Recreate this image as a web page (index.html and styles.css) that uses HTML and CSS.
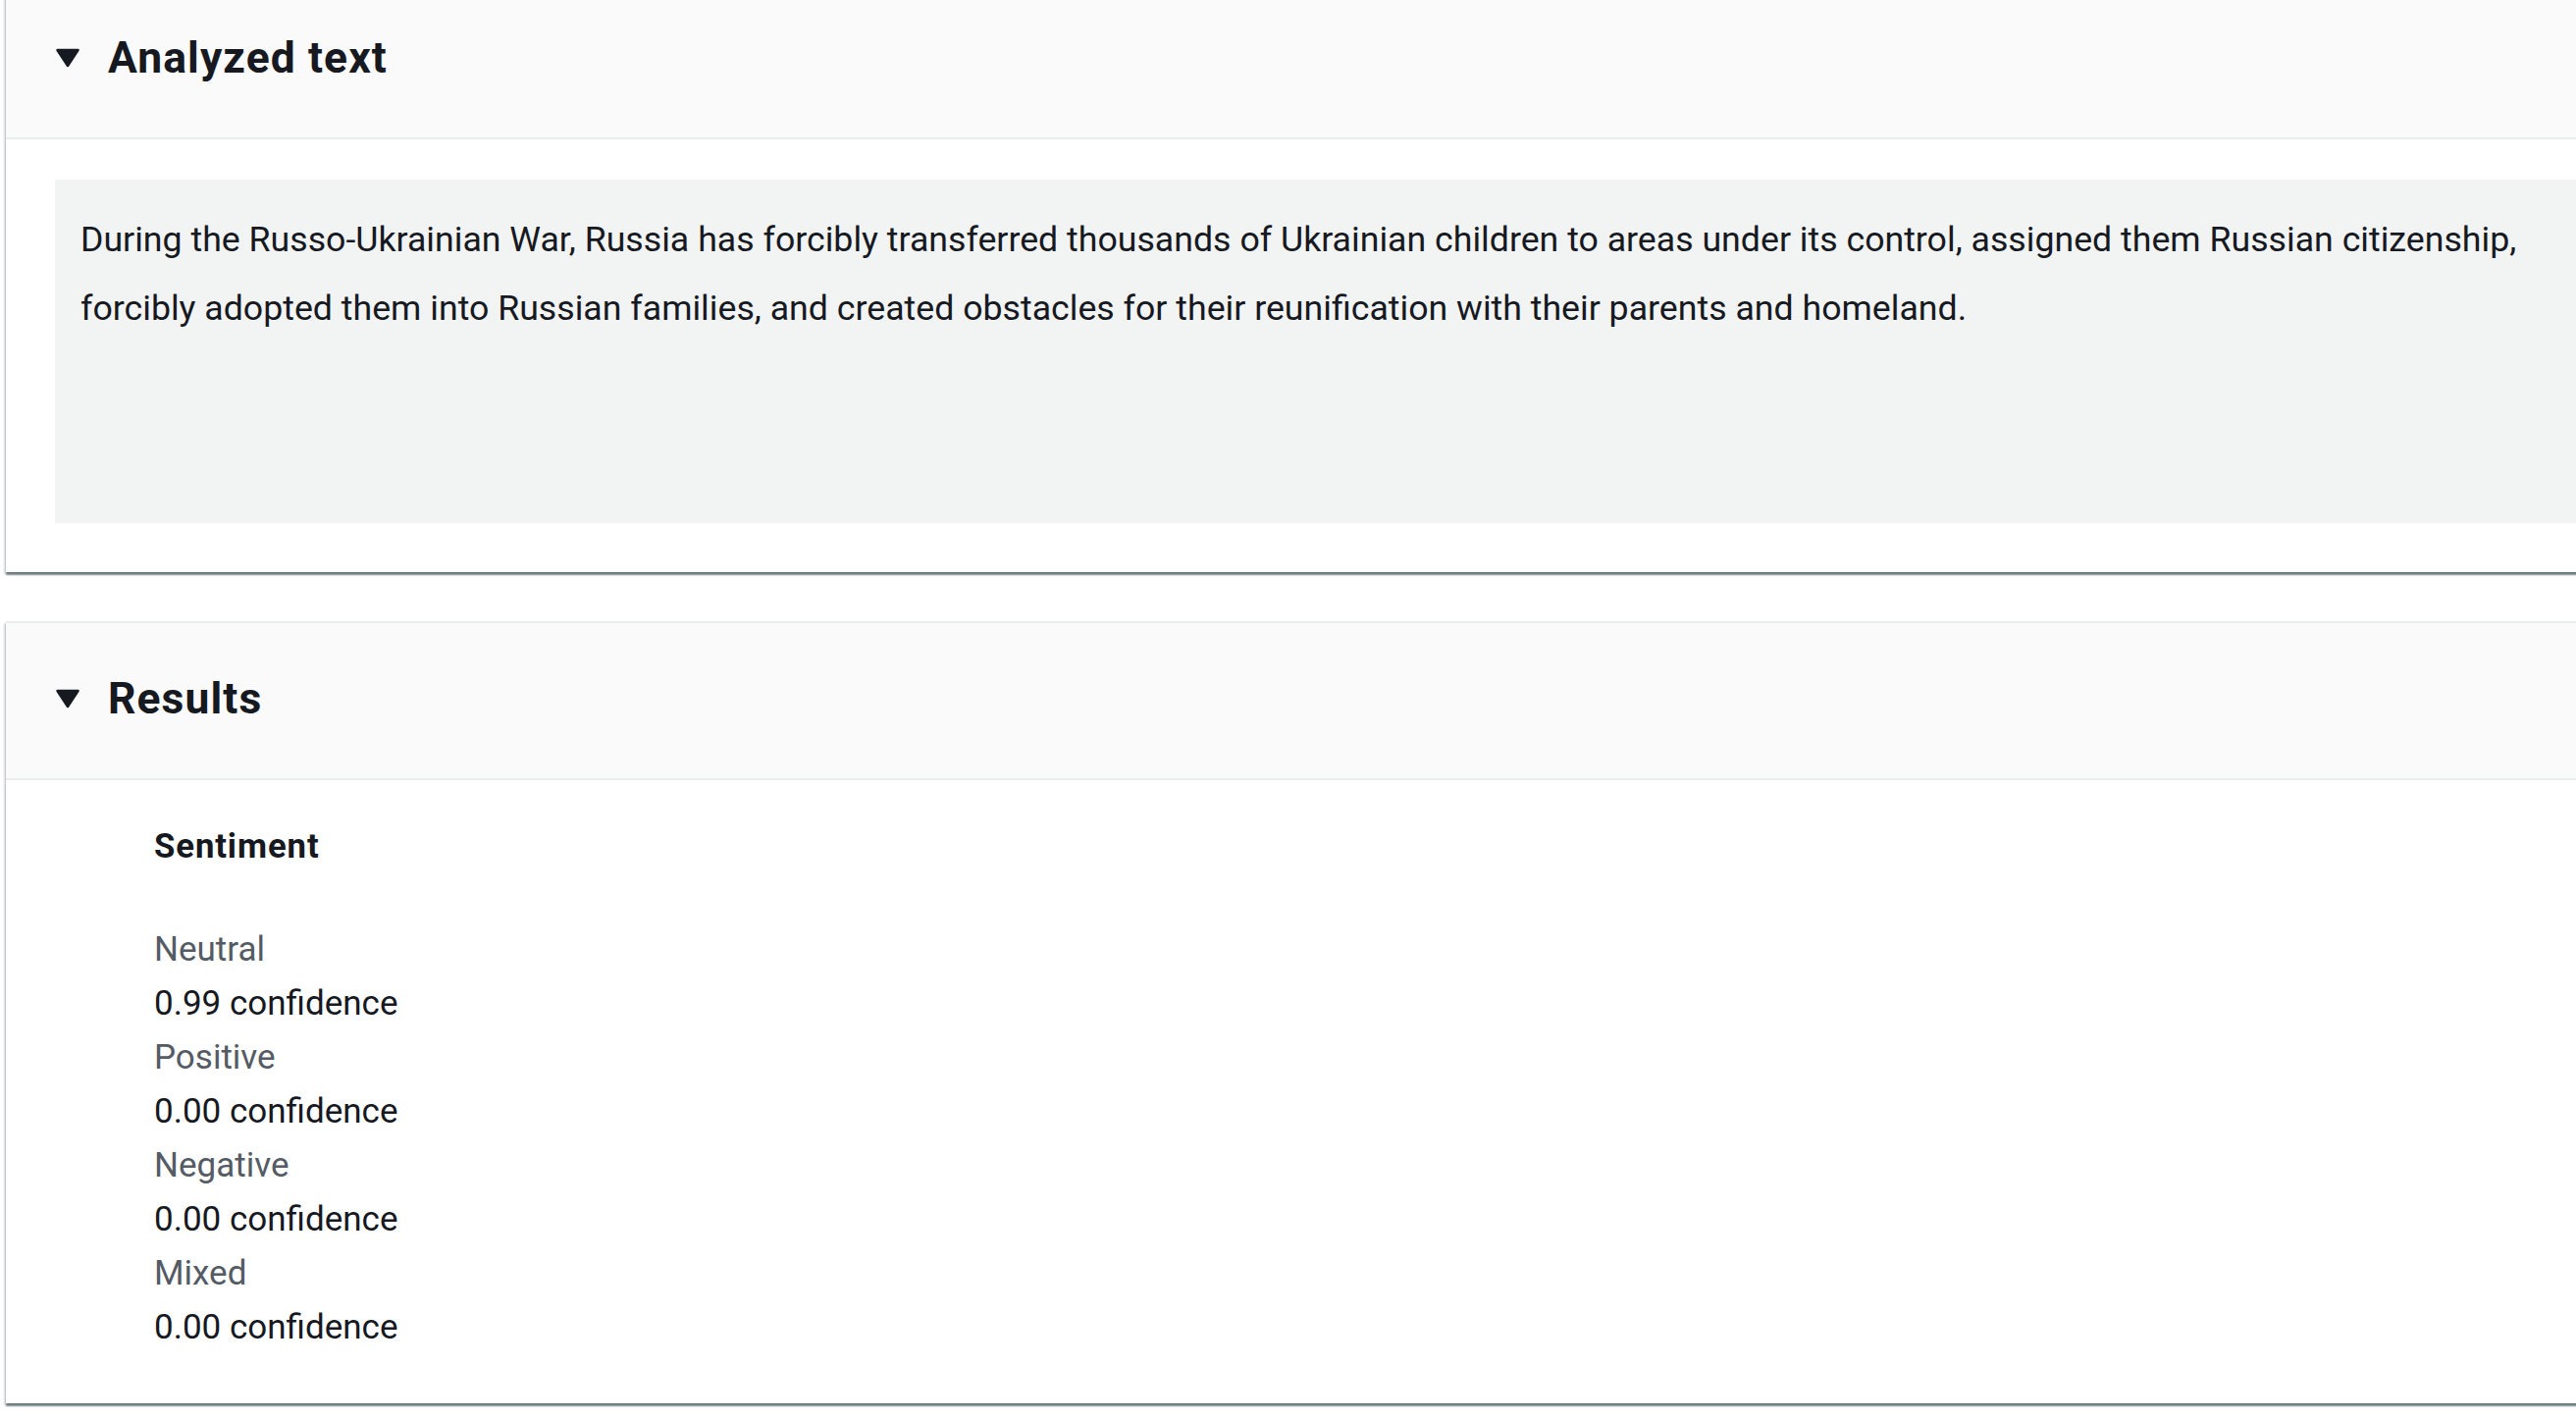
FILE: index.html
```html
<!DOCTYPE html>
<html lang="en">
<head>
<meta charset="utf-8">
<title>Analyzed text</title>
<link rel="stylesheet" href="styles.css">
</head>
<body>
<main class="page">
  <section class="card">
    <header class="card-header">
      <svg class="caret" viewBox="0 0 26 20" width="26" height="20" aria-hidden="true"><path d="M2.5 2 H23.5 L13 18 Z"/></svg>
      <h2 class="card-title">Analyzed text</h2>
    </header>
    <div class="card-body">
      <div class="text-box">During the Russo-Ukrainian War, Russia has forcibly transferred thousands of Ukrainian children to areas under its control, assigned them Russian citizenship, forcibly adopted them into Russian families, and created obstacles for their reunification with their parents and homeland.</div>
    </div>
  </section>

  <section class="card">
    <header class="card-header">
      <svg class="caret" viewBox="0 0 26 20" width="26" height="20" aria-hidden="true"><path d="M2.5 2 H23.5 L13 18 Z"/></svg>
      <h2 class="card-title">Results</h2>
    </header>
    <div class="card-body">
      <div class="sentiment">
        <h3 class="sentiment-title">Sentiment</h3>
        <dl class="scores">
          <dt class="score-label">Neutral</dt>
          <dd class="score-value">0.99 confidence</dd>
          <dt class="score-label">Positive</dt>
          <dd class="score-value">0.00 confidence</dd>
          <dt class="score-label">Negative</dt>
          <dd class="score-value">0.00 confidence</dd>
          <dt class="score-label">Mixed</dt>
          <dd class="score-value">0.00 confidence</dd>
        </dl>
      </div>
    </div>
  </section>
</main>
</body>
</html>
```
FILE: styles.css
```css
html {
  margin: 0;
  padding: 0;
  background: #ffffff;
  overflow: hidden;
}

body {
  margin: 0;
  padding: 0;
  font-family: Roboto, "Liberation Sans", sans-serif;
  color: #16191f;
}

.page {
  display: flex;
  flex-direction: column;
  gap: 50px;
  margin-top: -20px;
  padding-left: 6px;
  padding-bottom: 20px;
}

.card {
  width: 2680px;
  background: #ffffff;
  border-top: 2px solid #eaeded;
  box-shadow: 0 3px 1.5px 0 rgba(0, 28, 36, 0.45),
              -2px 2px 2px 0 rgba(0, 28, 36, 0.14),
              2px 2px 2px 0 rgba(0, 28, 36, 0.14);
}

.card-header {
  display: flex;
  align-items: center;
  gap: 28px;
  padding: 47px 50px 51px;
  background: #fafafa;
  border-bottom: 2px solid #eaeded;
}

.caret {
  flex: none;
  display: block;
}

.caret path {
  fill: #16191f;
  stroke: #16191f;
  stroke-width: 2.5;
  stroke-linejoin: round;
}

.card-title {
  margin: 0;
  font-size: 44.4px;
  font-weight: 700;
  line-height: 60px;
  letter-spacing: 1.1px;
}

.card-body {
  padding: 40px 50px 50px;
}

.card-body .text-box {
  margin-top: 1px;
}

.text-box {
  box-sizing: border-box;
  height: 350px;
  padding: 26px;
  background: #f2f3f3;
  font-size: 35.7px;
  line-height: 70px;
}

.sentiment {
  padding-left: 101px;
}

.sentiment-title {
  margin: 0 0 50px;
  font-size: 34.7px;
  font-weight: 700;
  line-height: 55px;
  letter-spacing: 0.9px;
}

.scores {
  margin: 0;
  font-size: 35px;
  line-height: 55px;
}

.score-label {
  color: #545b64;
}

.score-value {
  margin: 0;
  color: #16191f;
}
```
